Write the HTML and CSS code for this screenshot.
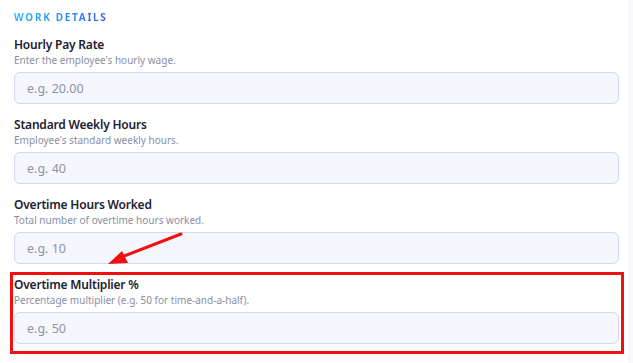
FILE: index.html
```html
<!DOCTYPE html>
<html lang="en">
<head>
    <meta charset="UTF-8">
    <meta name="viewport" content="width=device-width, initial-scale=1.0">
    <title>Work Details</title>
    <link rel="stylesheet" href="styles.css">
</head>
<body>
    <div class="card">
        <h2 class="section-title">Work Details</h2>

        <!-- Hourly pay -->
        <div class="field">
            <label class="field-label" for="rate">Hourly Pay Rate</label>
            <div class="field-help">Enter the employee's hourly wage.</div>
            <input class="field-input" id="rate" type="text" placeholder="e.g. 20.00">
        </div>

        <!-- Weekly hours -->
        <div class="field">
            <label class="field-label" for="weekly">Standard Weekly Hours</label>
            <div class="field-help">Employee's standard weekly hours.</div>
            <input class="field-input" id="weekly" type="text" placeholder="e.g. 40">
        </div>

        <!-- Overtime hours -->
        <div class="field">
            <label class="field-label" for="overtime">Overtime Hours Worked</label>
            <div class="field-help">Total number of overtime hours worked.</div>
            <input class="field-input" id="overtime" type="text" placeholder="e.g. 10">
        </div>

        <!-- Overtime multiplier -->
        <div class="field">
            <label class="field-label" for="multiplier">Overtime Multiplier %</label>
            <div class="field-help">Percentage multiplier (e.g. 50 for time-and-a-half).</div>
            <input class="field-input" id="multiplier" type="text" placeholder="e.g. 50">
        </div>

        <!-- Annotation -->
        <div class="highlight"></div>
        <svg class="arrow" width="90" height="40" viewBox="0 0 90 40">
            <line x1="82" y1="3" x2="20" y2="27" stroke="#f01010" stroke-width="3" stroke-linecap="round"/>
            <polygon points="9,33 23,20 29,32" fill="#f01010"/>
        </svg>
    </div>
</body>
</html>
```

FILE: styles.css
```css
body {
    margin: 0;
    background-color: #f7f7fc;
    font-family: 'Noto Sans', 'Open Sans', sans-serif;
}

.card {
    position: relative;
    width: 628px;
    height: 363px;
    box-sizing: border-box;
    background-color: #ffffff;
    padding: 11px 10px 0 14px;
}

.section-title {
    display: block;
    width: max-content;
    margin: 0 0 14px 0;
    font-size: 10px;
    line-height: 12px;
    font-weight: 700;
    letter-spacing: 1.7px;
    text-transform: uppercase;
    background: linear-gradient(90deg, #2bb8f5, #3a63f0);
    -webkit-background-clip: text;
    background-clip: text;
    color: transparent;
}

.field {
    margin-bottom: 13px;
}

.field-label {
    display: block;
    font-size: 12px;
    line-height: 16px;
    font-weight: 600;
    letter-spacing: -0.2px;
    color: #1d2033;
}

.field-help {
    font-size: 10px;
    line-height: 14px;
    color: #8a8fa3;
    margin-bottom: 5px;
}

.field-input {
    display: block;
    width: 605px;
    height: 32px;
    box-sizing: border-box;
    padding: 0 12px;
    border: 1px solid #d3d7ee;
    border-radius: 6px;
    background-color: #f6f6fe;
    font-family: inherit;
    font-size: 12.5px;
    color: #333;
}

.field-input::placeholder {
    color: #8e93a4;
}

.highlight {
    position: absolute;
    left: 10px;
    top: 272px;
    width: 614px;
    height: 82px;
    box-sizing: border-box;
    border: 3px solid #f01010;
}

.arrow {
    position: absolute;
    left: 99px;
    top: 231px;
}
```
